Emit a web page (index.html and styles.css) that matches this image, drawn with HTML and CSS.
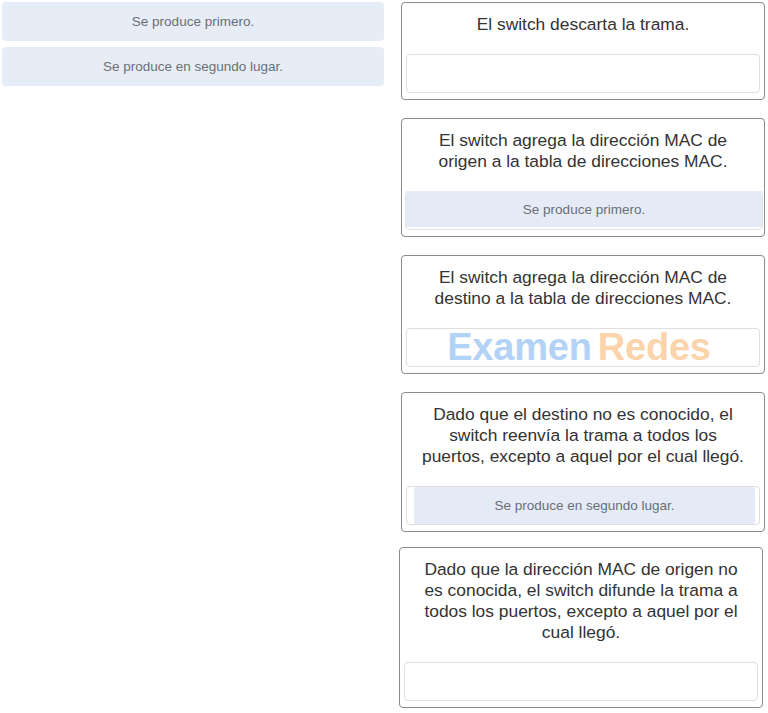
FILE: index.html
```html
<!DOCTYPE html>
<html lang="es">
<head>
<meta charset="utf-8">
<title>Arrastrar y soltar</title>
<link rel="stylesheet" href="styles.css">
</head>
<body>
<div class="page">
  <div class="options">
    <div class="option">Se produce primero.</div>
    <div class="option">Se produce en segundo lugar.</div>
  </div>
  <div class="targets">
    <div class="card">
      <div class="card-text">El switch descarta la trama.</div>
      <div class="zone"></div>
    </div>
    <div class="card">
      <div class="card-text">El switch agrega la dirección MAC de origen a la tabla de direcciones MAC.</div>
      <div class="zone zone-filled-wide">
        <div class="placed placed-wide">Se produce primero.</div>
      </div>
    </div>
    <div class="card">
      <div class="card-text">El switch agrega la dirección MAC de destino a la tabla de direcciones MAC.</div>
      <div class="zone zone-mark">
        <span class="mark-a">Examen</span><span class="mark-b">Redes</span>
      </div>
    </div>
    <div class="card">
      <div class="card-text">Dado que el destino no es conocido, el switch reenvía la trama a todos los puertos, excepto a aquel por el cual llegó.</div>
      <div class="zone zone-filled-inset">
        <div class="placed placed-inset">Se produce en segundo lugar.</div>
      </div>
    </div>
    <div class="card card-shift">
      <div class="card-text">Dado que la dirección MAC de origen no es conocida, el switch difunde la trama a todos los puertos, excepto a aquel por el cual llegó.</div>
      <div class="zone"></div>
    </div>
  </div>
</div>
</body>
</html>
```

FILE: styles.css
```css
html, body {
  margin: 0;
  padding: 0;
  background: #ffffff;
}

body {
  font-family: "Liberation Sans", Arial, sans-serif;
  color: #333333;
}

.page {
  display: flex;
  align-items: flex-start;
  gap: 17px;
  padding: 2px 0 0 2px;
}

.options {
  width: 382px;
  display: flex;
  flex-direction: column;
  gap: 6px;
}

.option {
  height: 39px;
  display: flex;
  align-items: center;
  justify-content: center;
  background: #e7edf6;
  border-radius: 4px;
  font-size: 13.5px;
  color: #6a6f75;
}

.targets {
  width: 364px;
  display: flex;
  flex-direction: column;
  gap: 18px;
}

.card {
  border: 1px solid #8c8c8c;
  border-radius: 4px;
  padding: 11px 4px 6px 4px;
  background: #ffffff;
  box-shadow: 0 0 1px rgba(0, 0, 0, 0.08);
}

.card-shift {
  margin-top: -3px;
  margin-left: -2px;
  margin-right: 2px;
}

.card-text {
  font-size: 17.4px;
  line-height: 21px;
  text-align: center;
  color: #333333;
  padding: 0 11px;
}

.zone {
  margin-top: 19px;
  height: 37px;
  border: 1px solid #dedede;
  border-radius: 4px;
  display: flex;
  align-items: center;
  justify-content: center;
}

.zone-filled-wide {
  border-color: #e3e3e3;
  align-items: flex-start;
  margin-left: -1px;
  margin-right: -3px;
}

.placed {
  display: flex;
  align-items: center;
  justify-content: center;
  background: #e4ebf6;
  font-size: 13.5px;
  color: #6a6f75;
}

.placed-wide {
  width: 100%;
  height: 36px;
  margin-top: -1px;
}

.zone-filled-inset {
  justify-content: flex-start;
  padding: 0 4px 0 7px;
}

.placed-inset {
  flex: 1;
  height: 37px;
  border-radius: 2px;
}

.zone-mark {
  gap: 6px;
  padding-right: 8px;
  font-weight: bold;
  font-size: 38px;
  line-height: 37px;
  letter-spacing: -0.2px;
}

.mark-a {
  color: #b3d3f6;
}

.mark-b {
  color: #fbd4ab;
}
```
